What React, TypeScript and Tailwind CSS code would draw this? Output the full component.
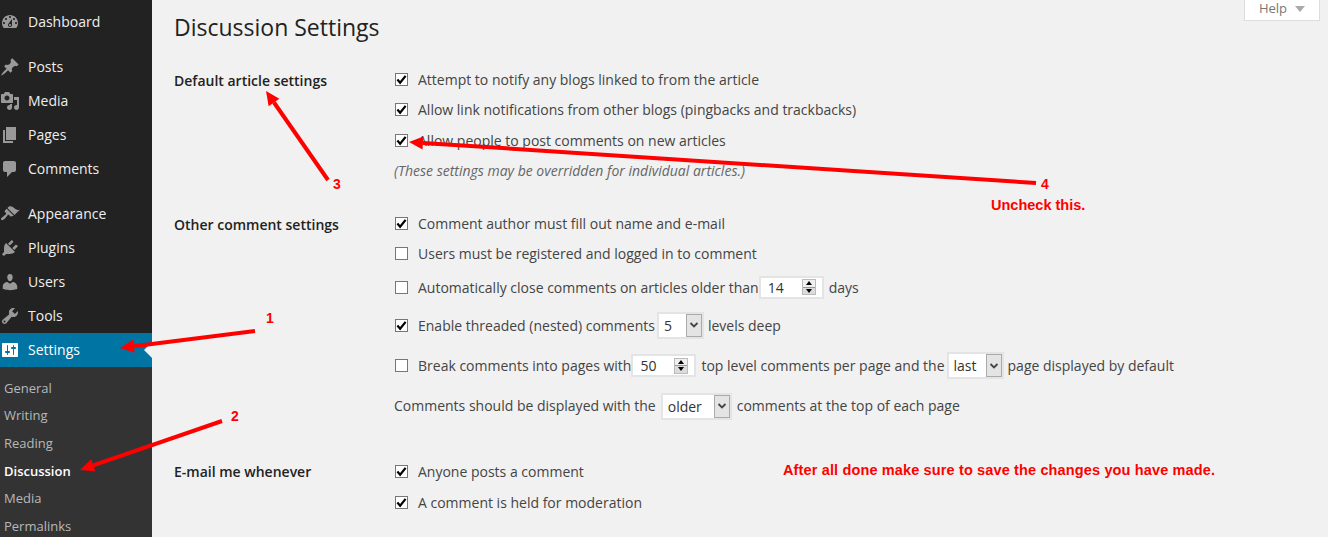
const menuGroups = [
  [
    {
      label: "Dashboard",
      d: "M3.76 16h12.48c1.1-1.37 1.76-3.11 1.76-5 0-4.42-3.58-8-8-8s-8 3.58-8 8c0 1.89.66 3.63 1.76 5zM10 4c.55 0 1 .45 1 1s-.45 1-1 1-1-.45-1-1 .45-1 1-1zM6 6c.55 0 1 .45 1 1s-.45 1-1 1-1-.45-1-1 .45-1 1-1zm8 0c.55 0 1 .45 1 1s-.45 1-1 1-1-.45-1-1 .45-1 1-1zm-5.37 5.55L12 7v6c0 1.1-.9 2-2 2s-2-.9-2-2c0-.57.24-1.08.63-1.45zM4 10c.55 0 1 .45 1 1s-.45 1-1 1-1-.45-1-1 .45-1 1-1zm12 0c.55 0 1 .45 1 1s-.45 1-1 1-1-.45-1-1 .45-1 1-1zm-5 3c0-.55-.45-1-1-1s-1 .45-1 1 .45 1 1 1 1-.45 1-1z",
    },
  ],
  [
    {
      label: "Posts",
      d: "M10.44 3.02l1.82-1.82 6.36 6.35-1.83 1.82c-1.05-.68-2.48-.57-3.41.36l-.75.75c-.92.93-1.04 2.35-.35 3.41l-1.83 1.82-2.41-2.41-2.8 2.79c-.42.42-3.38 2.71-3.8 2.29s1.86-3.39 2.28-3.81l2.79-2.79L4.1 9.36l1.83-1.82c1.05.69 2.48.57 3.4-.36l.75-.75c.93-.92 1.05-2.35.36-3.41z",
    },
    {
      label: "Media",
      d: "M13 11V4c0-.55-.45-1-1-1h-1.67L9 1H5L3.67 3H2c-.55 0-1 .45-1 1v7c0 .55.45 1 1 1h10c.55 0 1-.45 1-1zM7 4.5c1.38 0 2.5 1.12 2.5 2.5S8.38 9.5 7 9.5 4.5 8.38 4.5 7 5.62 4.5 7 4.5zM14 6h5v10.5c0 1.38-1.12 2.5-2.5 2.5S14 17.88 14 16.5s1.12-2.5 2.5-2.5c.17 0 .34.02.5.05V9h-3V6zm-4 8.05V13h2v3.5c0 1.38-1.12 2.5-2.5 2.5S7 17.88 7 16.5 8.12 14 9.5 14c.17 0 .34.02.5.05z",
    },
    { label: "Pages", d: "M6 15V2h10v13H6zm-1 1h8v2H3V5h2v11z" },
    {
      label: "Comments",
      d: "M5 2h9c1.1 0 2 .9 2 2v7c0 1.1-.9 2-2 2h-2l-5 5v-5H5c-1.1 0-2-.9-2-2V4c0-1.1.9-2 2-2z",
    },
  ],
  [
    {
      label: "Appearance",
      d: "M14.48 11.06L7.41 3.99l1.5-1.5c.5-.56 2.3-.47 3.51.32 1.21.8 1.43 1.28 2.91 2.1 1.18.64 2.45 1.26 4.45.85zm-.71.71L6.7 4.7 4.93 6.47c-.39.39-.39 1.02 0 1.41l1.06 1.06c.39.39.39 1.03 0 1.42-.6.6-1.43 1.11-2.21 1.69-.35.26-.7.53-1.01.84C1.43 13.23.4 14.89 1.3 15.8c.9.91 2.56-.12 3.9-1.46.31-.31.58-.66.85-1.01.58-.78 1.09-1.6 1.69-2.21.39-.39 1.02-.39 1.41 0l1.06 1.06c.39.39 1.02.39 1.41 0z",
    },
    {
      label: "Plugins",
      d: "M13.11 4.36L9.87 7.6 8 5.73l3.24-3.24c.35-.34 1.05-.2 1.56.32.52.51.66 1.21.31 1.55zm-8 1.77l.91-1.12 9.01 9.01-1.19.84c-.71.71-2.63 1.16-3.82 1.16H6.14L4.9 17.26c-.59.59-1.54.59-2.12 0-.59-.58-.59-1.53 0-2.12l1.24-1.24v-3.88c0-1.13.4-3.19 1.09-3.89zm7.26 3.97l3.24-3.24c.34-.35 1.04-.21 1.55.31.52.51.66 1.21.31 1.55l-3.24 3.25z",
    },
    {
      label: "Users",
      d: "M10 9.25c-2.27 0-2.73-3.44-2.73-3.44C7 4.02 7.82 2 9.97 2c2.16 0 2.98 2.02 2.71 3.81 0 0-.41 3.44-2.68 3.44zm0 2.57L12.72 10c2.39 0 4.52 2.33 4.52 4.53v2.49s-3.65 1.13-7.24 1.13c-3.65 0-7.24-1.13-7.24-1.13v-2.49c0-2.25 1.94-4.48 4.47-4.48z",
    },
    {
      label: "Tools",
      d: "M16.68 9.77c-1.34 1.34-3.3 1.67-4.95.99l-5.41 6.52c-.99.99-2.59.99-3.58 0s-.99-2.59 0-3.57l6.52-5.42c-.68-1.65-.35-3.61.99-4.95 1.28-1.28 3.12-1.62 4.72-1.06l-2.89 2.89 2.82 2.82 2.86-2.87c.53 1.58.18 3.39-1.08 4.67zM3.81 16.21c.4.39 1.04.39 1.43 0 .4-.4.4-1.04 0-1.43-.39-.4-1.03-.4-1.43 0-.39.39-.39 1.03 0 1.43z",
    },
  ],
];

const settingsIcon =
  "M18 16V4c0-.55-.45-1-1-1H3c-.55 0-1 .45-1 1v12c0 .55.45 1 1 1h14c.55 0 1-.45 1-1zM8 11h1c.55 0 1 .45 1 1s-.45 1-1 1H8v1.5c0 .28-.22.5-.5.5s-.5-.22-.5-.5V13H6c-.55 0-1-.45-1-1s.45-1 1-1h1V5.5c0-.28.22-.5.5-.5s.5.22.5.5V11zm5-2h-1c-.55 0-1-.45-1-1s.45-1 1-1h1V5.5c0-.28.22-.5.5-.5s.5.22.5.5V7h1c.55 0 1 .45 1 1s-.45 1-1 1h-1v5.5c0 .28-.22.5-.5.5s-.5-.22-.5-.5V9z";

const subItems = ["General", "Writing", "Reading", "Discussion", "Media", "Permalinks"];

function MenuIcon({ d, className }: { d: string; className: string }) {
  return (
    <svg viewBox="0 0 20 20" className={`h-5 w-5 shrink-0 ${className}`} fill="currentColor">
      <path d={d} />
    </svg>
  );
}

function Sidebar() {
  return (
    <aside className="w-[152px] shrink-0 h-[537px] overflow-hidden bg-[#222] text-sm">
      <nav className="pt-[5px]">
        {menuGroups.map((group, i) => (
          <div key={i} className="mb-[11px]">
            {group.map((item) => (
              <a key={item.label} className="flex h-[34px] items-center text-[#eee]">
                <MenuIcon d={item.d} className="text-[#999]" />
                <span className="ml-2">{item.label}</span>
              </a>
            ))}
          </div>
        ))}
      </nav>
      <a className="relative -mt-[11px] flex h-[34px] items-center bg-[#0074a2] text-white">
        <MenuIcon d={settingsIcon} className="text-white" />
        <span className="ml-2">Settings</span>
        <span className="absolute right-0 top-[9px] border-y-8 border-r-8 border-y-transparent border-r-[#f1f1f1]" />
      </a>
      <ul className="bg-[#333] pt-[7px] pb-4 text-[13px]">
        {subItems.map((s) => (
          <li
            key={s}
            className={`flex h-[27.7px] items-center pl-1 ${s === "Discussion" ? "font-semibold text-white" : "text-[#b4b9be]"}`}
          >
            {s}
          </li>
        ))}
      </ul>
    </aside>
  );
}

function Checkbox({ checked }: { checked?: boolean }) {
  return (
    <span className="ml-[1px] mr-[10px] flex h-[13px] w-[13px] shrink-0 items-center justify-center border border-[#777] bg-white">
      {checked && (
        <svg viewBox="0 0 12 12" className="h-[11px] w-[11px] text-black" fill="none" stroke="currentColor" strokeWidth="2.4">
          <path d="M1.5 6 L4.5 9.5 L10.5 2" />
        </svg>
      )}
    </span>
  );
}

function Spinner({ value }: { value: string }) {
  return (
    <span className="mr-[5px] flex h-[23px] w-[65px] items-center justify-between border-2 border-[#e4e4e4] bg-white pl-[7px] pr-[6px] text-[14px] text-[#333]">
      {value}
      <span className="flex h-[16px] w-[14px] flex-col border border-[#bbb]">
        <span className="flex flex-1 items-center justify-center bg-[#f0f0f0]">
          <span className="border-x-[3px] border-b-[4px] border-x-transparent border-b-black" />
        </span>
        <span className="flex flex-1 items-center justify-center border-t border-[#999] bg-[#dcdcdc]">
          <span className="border-x-[3px] border-t-[4px] border-x-transparent border-t-black" />
        </span>
      </span>
    </span>
  );
}

function Select({ value, className }: { value: string; className: string }) {
  return (
    <span className={`flex h-[27px] items-stretch border-2 border-[#e4e4e4] bg-white text-[14px] text-[#333] ${className}`}>
      <span className="flex flex-1 items-center pl-[5px]">{value}</span>
      <span className="flex w-[16px] items-center justify-center border border-[#aaa] bg-[#e4e4e4]">
        <svg viewBox="0 0 10 6" className="h-[6px] w-[10px] text-[#444]" fill="none" stroke="currentColor" strokeWidth="1.8">
          <path d="M1.5 1 L5 4.5 L8.5 1" />
        </svg>
      </span>
    </span>
  );
}

function Row({ className, children }: { className: string; children: React.ReactNode }) {
  return <div className={`flex items-center whitespace-pre ${className}`}>{children}</div>;
}

function Annotations() {
  const red = "#ff0000";
  const arrows: [number, number, number, number][] = [
    [255, 331, 120, 348],
    [222, 421, 80, 470],
    [328, 180, 266, 91],
    [1036, 183, 409, 142],
  ];
  return (
    <>
      <svg className="pointer-events-none absolute inset-0 h-[537px] w-[1328px]" viewBox="0 0 1328 537">
        {arrows.map(([x1, y1, x2, y2], i) => {
          const a = Math.atan2(y2 - y1, x2 - x1);
          const bx = x2 - Math.cos(a) * 14;
          const by = y2 - Math.sin(a) * 14;
          const nx = -Math.sin(a) * 6.5;
          const ny = Math.cos(a) * 6.5;
          return (
            <g key={i}>
              <line x1={x1} y1={y1} x2={bx} y2={by} stroke={red} strokeWidth="4" />
              <polygon points={`${x2},${y2} ${bx + nx},${by + ny} ${bx - nx},${by - ny}`} fill={red} />
            </g>
          );
        })}
      </svg>
      {[
        ["1", "left-[266px] top-[310px]"],
        ["2", "left-[231px] top-[408px]"],
        ["3", "left-[333px] top-[176px]"],
        ["4", "left-[1041px] top-[176px]"],
      ].map(([text, pos]) => (
        <span
          key={text}
          className={`absolute font-['Liberation_Sans',sans-serif] text-[14px] leading-4 font-bold text-[#ff0000] ${pos}`}
        >
          {text}
        </span>
      ))}
      <span className="absolute left-[991px] top-[197px] whitespace-nowrap font-['Liberation_Sans',sans-serif] text-[14.5px] leading-4 font-bold text-[#ff0000]">
        Uncheck this.
      </span>
      <span className="absolute left-[783px] top-[462px] whitespace-nowrap font-['Liberation_Sans',sans-serif] text-[14.5px] leading-4 font-bold tracking-[0.14px] text-[#ff0000]">
        After all done make sure to save the changes you have made.
      </span>
    </>
  );
}

export default function App() {
  return (
    <div className="relative flex h-[537px] w-[1328px] overflow-hidden bg-[#f1f1f1] font-['Open_Sans',sans-serif] text-[14px] text-[#444]">
      <Sidebar />
      <main className="relative flex-1">
        <div className="absolute right-[8px] top-0 flex h-[21px] w-[76px] items-center justify-center gap-2 border border-t-0 border-[#ddd] bg-white pb-[3px] text-[13px] text-[#777]">
          Help
          <span className="border-x-[5px] border-t-[6px] border-x-transparent border-t-[#aaa]" />
        </div>
        <h1 className="pl-[22px] pt-[12px] text-[23px] leading-[31px] text-[#222]">Discussion Settings</h1>

        <div className="mt-[21px] flex pl-[22px]">
          <h2 className="w-[220px] pt-[7px] font-semibold leading-5 text-[#222]">Default article settings</h2>
          <div className="flex-1">
            <Row className="h-[30px]"><Checkbox checked />Attempt to notify any blogs linked to from the article</Row>
            <Row className="h-[30px]"><Checkbox checked />Allow link notifications from other blogs (pingbacks and trackbacks)</Row>
            <Row className="h-[32px]"><Checkbox checked />Allow people to post comments on new articles</Row>
            <p className="h-[30px] pt-[5px] leading-5 italic text-[#666]">(These settings may be overridden for individual articles.)</p>
          </div>
        </div>

        <div className="mt-[22px] flex pl-[22px]">
          <h2 className="w-[220px] pt-[7px] font-semibold leading-5 text-[#222]">Other comment settings</h2>
          <div className="flex-1">
            <Row className="h-[30px]"><Checkbox checked />Comment author must fill out name and e-mail</Row>
            <Row className="h-[30px]"><Checkbox />Users must be registered and logged in to comment</Row>
            <Row className="h-[38px]">
              <Checkbox />Automatically close comments on articles older than<Spinner value="14" />days
            </Row>
            <Row className="h-[38px]">
              <Checkbox checked />Enable threaded (nested) comments<Select value="5" className="ml-[2px] mr-[4px] w-[47px]" />levels deep
            </Row>
            <Row className="h-[43px]">
              <Checkbox />Break comments into pages with<Spinner value="50" />top level comments per page and the<Select value="last" className="ml-[2px] mr-[4px] w-[57px]" />page displayed by default
            </Row>
            <Row className="h-[37px]">
              Comments should be displayed with the<Select value="older" className="mx-[5px] mt-[1px] w-[71px]" />comments at the top of each page
            </Row>
          </div>
        </div>

        <div className="mt-[32px] flex pl-[22px]">
          <h2 className="w-[220px] pt-[6px] font-semibold leading-5 text-[#222]">E-mail me whenever</h2>
          <div className="flex-1">
            <Row className="h-[31px]"><Checkbox checked />Anyone posts a comment</Row>
            <Row className="h-[31px]"><Checkbox checked />A comment is held for moderation</Row>
          </div>
        </div>
      </main>
      <Annotations />
    </div>
  );
}
